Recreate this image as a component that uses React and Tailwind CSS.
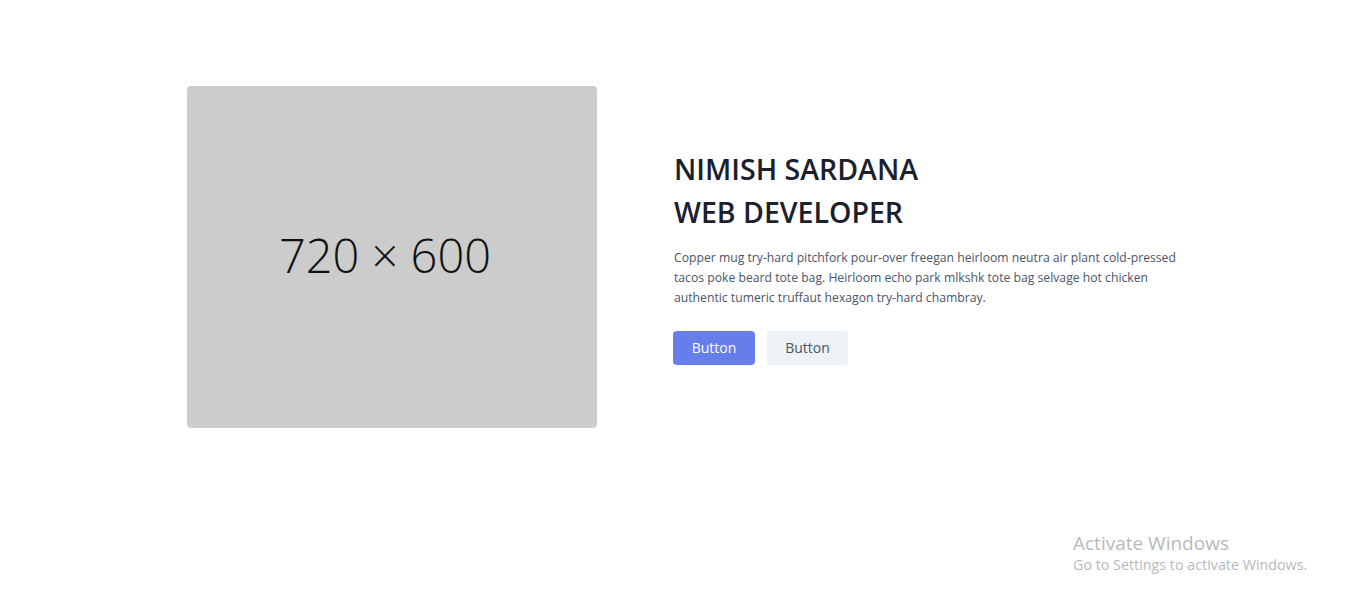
export default function App() {
  return (
    <div className="relative min-h-[606px] w-full bg-white" style={{ fontFamily: '"Open Sans", "Noto Sans", sans-serif' }}>
      <section className="flex items-center pt-[86px] pl-[187px]">
        <div className="flex h-[342px] w-[410px] shrink-0 items-center justify-center rounded bg-[#cccccc] pr-[14px] pb-[3px]">
          <span className="text-[47px] font-light text-[#111111]">720 × 600</span>
        </div>
        <div className="ml-[77px] flex w-[520px] flex-col items-start">
          <h1 className="mb-[14px] -mt-[2px] text-[28.5px] font-semibold leading-[43px] text-[#1a202c]">
            NIMISH SARDANA
            <br />
            WEB DEVELOPER
          </h1>
          <p className="mb-[23px] text-[12.2px] leading-[20px] text-[#4a5568]">
            Copper mug try-hard pitchfork pour-over freegan heirloom neutra air plant cold-pressed tacos poke beard tote bag. Heirloom echo park mlkshk tote bag selvage hot chicken authentic tumeric truffaut hexagon try-hard chambray.
          </p>
          <div className="-ml-px flex gap-3">
            <button className="h-[34px] w-[82px] rounded bg-[#667eea] text-[14px] text-white">Button</button>
            <button className="h-[34px] w-[81px] rounded bg-[#edf2f7] text-[14px] text-[#4a5568]">Button</button>
          </div>
        </div>
      </section>
      <div className="absolute left-[1073px] top-[531px] text-[#b9b9b9]">
        <div className="text-[19px] leading-[24px]">Activate Windows</div>
        <div className="text-[14.3px] leading-[20px]">Go to Settings to activate Windows.</div>
      </div>
    </div>
  );
}
